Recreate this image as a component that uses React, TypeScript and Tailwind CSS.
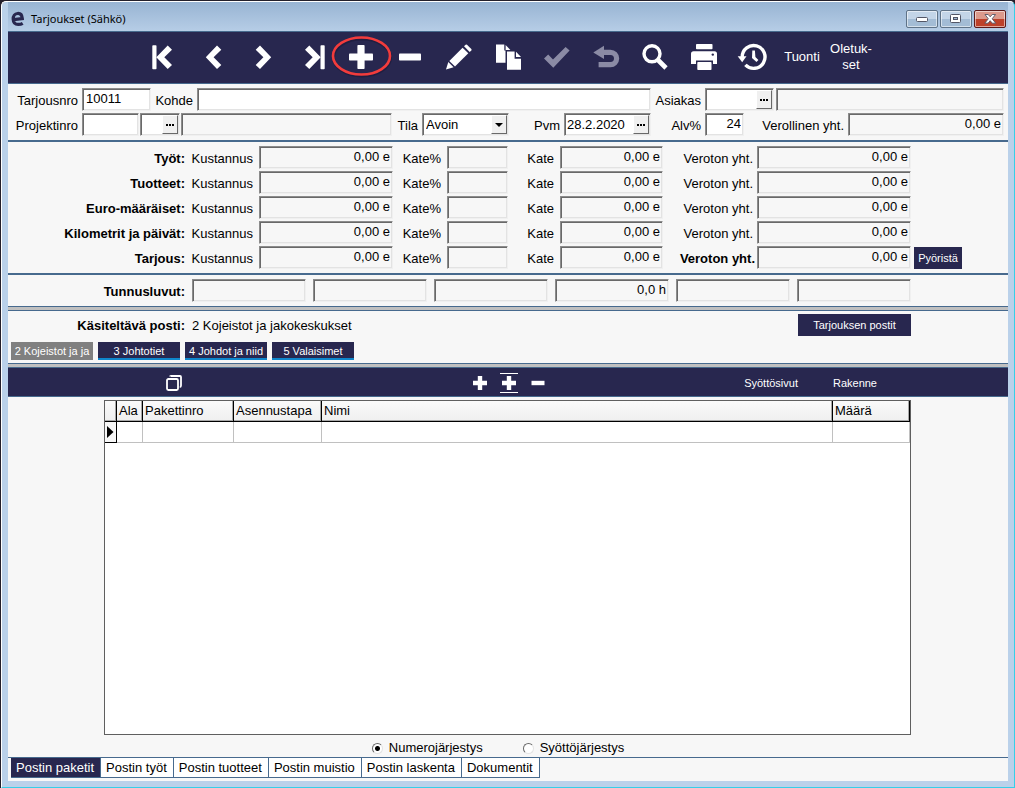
import { useState } from "react";
import type { ReactNode } from "react";
import clsx from "clsx";

const SUNKEN =
  "h-[23px] min-w-0 rounded-none border border-t-[#8c8c8c] border-l-[#8c8c8c] border-r-[#f0f0f0] border-b-[#f0f0f0] shadow-[inset_1px_1px_0_#696969,inset_-1px_-1px_0_#e3e3e3] outline-none";

interface FieldProps {
  id?: string;
  label?: string;
  value?: string;
  readOnly?: boolean;
  right?: boolean;
  className?: string;
}

function Field({ id, label, value = "", readOnly, right, className }: FieldProps) {
  return (
    <input
      id={id}
      aria-label={label}
      type="text"
      defaultValue={value}
      readOnly={readOnly}
      className={clsx(
        SUNKEN,
        "pr-0.5 pb-0.5 pl-[3px]",
        readOnly ? "bg-[#f7f7f7]" : "bg-white",
        right && "text-right",
        className
      )}
    />
  );
}

// Text box with a "..." lookup button on its right side
function LookupField({ id, label, value = "", className }: FieldProps) {
  return (
    <div className={clsx(SUNKEN, "flex bg-white p-px", className)}>
      <input
        id={id}
        aria-label={label}
        type="text"
        defaultValue={value}
        className="min-w-0 flex-1 bg-transparent pl-px outline-none"
      />
      <button
        type="button"
        aria-label="Valitse"
        className="flex w-4 shrink-0 items-center justify-center border border-t-white border-l-white border-r-[#696969] border-b-[#696969] bg-[#f0f0f0]"
      >
        <svg width="8" height="2" viewBox="0 0 8 2">
          <path d="M0 0h2v2H0zM3 0h2v2H3zM6 0h2v2H6z" fill="#000" />
        </svg>
      </button>
    </div>
  );
}

const NAV_ICONS: { name: string; dim?: boolean; marked?: boolean; art: ReactNode }[] = [
  {
    name: "Ensimmäinen",
    art: (
      <>
        <rect x="3.3" y="4.3" width="4.2" height="24" rx="0.8" />
        <path d="M18.7 4.5 23 8.7 15.3 16.3 23 24 18.7 28 7.3 16.3z" />
      </>
    ),
  },
  { name: "Edellinen", art: <path d="M19 4.5 23.3 8.7 15.6 16.3 23.3 24 19 28 7.8 16.3z" /> },
  { name: "Seuraava", art: <path d="M13 4.5 8.7 8.7 16.4 16.3 8.7 24 13 28 24.2 16.3z" /> },
  {
    name: "Viimeinen",
    art: (
      <>
        <path d="M13.3 4.5 9 8.7 16.7 16.3 9 24 13.3 28 24.7 16.3z" />
        <rect x="24.5" y="4.3" width="4.2" height="24" rx="0.8" />
      </>
    ),
  },
  {
    name: "Lisää",
    marked: true,
    art: (
      <>
        <rect x="12.4" y="4" width="7.2" height="24" rx="0.8" />
        <rect x="4" y="12.4" width="24" height="7.2" rx="0.8" />
      </>
    ),
  },
  { name: "Poista", art: <rect x="5" y="12.4" width="22" height="7.2" rx="0.8" /> },
  {
    name: "Muokkaa",
    art: (
      <>
        <path d="M3 28.6 5.3 21 10.6 26.3z" />
        <path d="M6.3 20 19.6 6.7 25.3 12.3 12 25.4z" />
        <path d="M21 5.3 22.6 3.8q.7-.6 1.4 0L28.3 8q.7.7 0 1.5L26.7 11z" />
      </>
    ),
  },
  {
    name: "Kopioi",
    art: (
      <>
        <path d="M4 3.4h8.3v6h1.2v12.3H4z" />
        <path d="M13.6 4 18.4 9H13.6z" />
        <path d="M15 10.5h7.6v7.2H29v11H15z" />
        <path d="M24 10.8 29 16H24z" />
      </>
    ),
  },
  { name: "Tallenna", dim: true, art: <path d="M3 17.6 7.2 13.6 12 18.4 24.6 6 28.6 9.6 12.3 26.8z" /> },
  {
    name: "Peruuta",
    dim: true,
    art: (
      <>
        <path d="M3.3 11.4 14 4.8V18z" />
        <path d="M12 11.4h8.5a6.1 6.1 0 0 1 0 12.2H8.6" fill="none" stroke="currentColor" strokeWidth="5.2" />
      </>
    ),
  },
  {
    name: "Etsi",
    art: (
      <>
        <circle cx="13" cy="12.8" r="8" fill="none" stroke="currentColor" strokeWidth="3.4" />
        <path d="M18.5 18.5 27 27" stroke="currentColor" strokeWidth="4.6" />
      </>
    ),
  },
  {
    name: "Tulosta",
    art: (
      <>
        <rect x="8" y="3" width="16.5" height="5.2" rx="0.8" />
        <path d="M5.5 10.3h21a2.5 2.5 0 0 1 2.5 2.5V23h-4v-3.6H8V23H3V12.8a2.5 2.5 0 0 1 2.5-2.5z" />
        <circle cx="24.8" cy="13.6" r="1.2" fill="#28274f" />
        <rect x="9.3" y="21" width="14.2" height="8" rx="0.8" />
      </>
    ),
  },
  {
    name: "Historia",
    art: (
      <>
        <path d="M5.2 16A11.4 11.4 0 1 1 8.4 23.9" fill="none" stroke="currentColor" strokeWidth="3.4" />
        <path d="M0.7 15.3h8.8L5.2 21.2z" />
        <path d="M15.3 9.5h2.6l.5 6.5 3 3-1.9 1.9-4.5-3.8z" />
      </>
    ),
  },
];

const SUM_ROWS = ["Työt:", "Tuotteet:", "Euro-määräiset:", "Kilometrit ja päivät:", "Tarjous:"];
const POSTS = ["2 Kojeistot ja ja", "3 Johtotiet", "4 Johdot ja niid", "5 Valaisimet"];
const TABS = ["Postin paketit", "Postin työt", "Postin tuotteet", "Postin muistio", "Postin laskenta", "Dokumentit"];

function TitleBar() {
  const control =
    "flex h-[18px] w-8 items-center justify-center rounded-[2px] border shadow-[inset_0_0_0_1px_#ffffff88]";
  const glass = "border-[#5f7388] bg-linear-to-b from-[#c3d5e8] from-50% to-[#a3bcd5] to-50%";
  return (
    <header className="flex h-[29px] items-center bg-linear-to-b from-[#98b4d3] to-[#b6cde6] pt-1 pr-[2px] pl-[3px]">
      <svg width="14" height="16" viewBox="0 0 14 16" aria-hidden="true">
        <path
          d="M2.6 8.7 11.3 7.5C11 4 9 2.3 6.6 2.5 3.8 2.7 2.1 5 2.2 8.2c.1 3.4 2.1 5.2 5 5.2 1.7 0 3.2-.3 4.5-1.1"
          fill="none"
          stroke="#28274f"
          strokeWidth="3.2"
        />
      </svg>
      <h1 className="ml-1.5 flex-1 font-['Noto_Sans',sans-serif] text-[11px]">Tarjoukset (Sähkö)</h1>
      <div className="flex gap-0.5">
        <button type="button" aria-label="Pienennä" className={clsx(control, glass)}>
          <svg width="12" height="6" viewBox="0 0 12 6">
            <rect x="0.5" y="1.5" width="11" height="4" rx="1" fill="#fff" stroke="#535666" />
          </svg>
        </button>
        <button type="button" aria-label="Suurenna" className={clsx(control, glass)}>
          <svg width="12" height="10" viewBox="0 0 12 10">
            <rect x="0.5" y="0.5" width="10" height="8" rx="1" fill="#fff" stroke="#535666" />
            <rect x="3.5" y="3.5" width="4" height="2" fill="#9fb8d2" stroke="#535666" />
          </svg>
        </button>
        <button
          type="button"
          aria-label="Sulje"
          className={clsx(control, "border-[#5c1a1a] bg-linear-to-b from-[#dc9a8c] from-50% to-[#bd412a] to-50%")}
        >
          <svg width="13" height="10" viewBox="0 0 13 10">
            <path
              d="M1 .5h3.2l2 2.3 2-2.3h3.3L8.2 4.8l3.5 4.4H8.3l-2.1-2.5-2.1 2.5H.8l3.5-4.4z"
              fill="#fff"
              stroke="#535666"
              strokeWidth="0.9"
            />
          </svg>
        </button>
      </div>
    </header>
  );
}

function Toolbar() {
  return (
    <nav className="flex h-[53px] justify-center border-y border-[#476a8e] bg-[#28274f] pb-px text-white">
      {NAV_ICONS.map((icon) => (
        <button
          key={icon.name}
          type="button"
          aria-label={icon.name}
          className={clsx(
            "relative flex w-[49px] shrink-0 items-center justify-center",
            icon.dim && "text-[#8b8ba5]"
          )}
        >
          <svg width="32" height="32" viewBox="0 0 32 32" fill="currentColor">
            {icon.art}
          </svg>
          {icon.marked && (
            <svg className="absolute top-1 -left-2 z-10" width="64" height="44" viewBox="0 0 64 44">
              <ellipse cx="33" cy="21.5" rx="28.5" ry="18.5" fill="none" stroke="#1a1938" strokeWidth="3" opacity="0.6" />
              <ellipse cx="32.5" cy="20" rx="28.5" ry="18.5" fill="none" stroke="#f23c3c" strokeWidth="2.6" />
            </svg>
          )}
        </button>
      ))}
      <button type="button" className="w-[49px] shrink-0">Tuonti</button>
      <button type="button" className="w-[49px] shrink-0 leading-4">
        Oletuk-
        <br />
        set
      </button>
    </nav>
  );
}

function OfferHeader() {
  const label = "shrink-0 pt-0.5 text-right";
  return (
    <section className="flex flex-col gap-0.5 py-1 pr-1">
      <div className="flex items-center">
        <label htmlFor="tarjousnro" className={clsx(label, "w-[74px] pr-1")}>Tarjousnro</label>
        <Field id="tarjousnro" value="10011" className="w-[69px]" />
        <label htmlFor="kohde" className={clsx(label, "w-[46px] pr-1")}>Kohde</label>
        <Field id="kohde" className="flex-1" />
        <label htmlFor="asiakas" className={clsx(label, "w-[54px] pr-1")}>Asiakas</label>
        <div className="flex w-[299px] shrink-0 gap-0.5">
          <LookupField id="asiakas" className="w-[69px]" />
          <Field label="Asiakkaan nimi" readOnly className="flex-1" />
        </div>
      </div>
      <div className="flex items-center">
        <label htmlFor="projektinro" className={clsx(label, "w-[74px] pr-1")}>Projektinro</label>
        <div className="flex min-w-0 flex-1 gap-px">
          <Field id="projektinro" className="w-[57px]" />
          <LookupField label="Projektin osa" className="w-10" />
          <Field label="Projektin nimi" readOnly className="flex-1" />
        </div>
        <label htmlFor="tila" className={clsx(label, "w-[30px] pr-1")}>Tila</label>
        <div className={clsx(SUNKEN, "relative flex w-[87px] bg-white p-px")}>
          <select id="tila" className="w-full appearance-none bg-transparent pl-0.5 outline-none">
            <option>Avoin</option>
            <option>Hyväksytty</option>
            <option>Hylätty</option>
          </select>
          <span className="pointer-events-none absolute inset-y-px right-px flex w-4 items-center justify-center border border-t-white border-l-white border-r-[#696969] border-b-[#696969] bg-[#f0f0f0]">
            <svg width="8" height="4" viewBox="0 0 8 4">
              <path d="M0 0h8L4 4z" />
            </svg>
          </span>
        </div>
        <label htmlFor="pvm" className={clsx(label, "w-[55px] pr-1")}>Pvm</label>
        <LookupField id="pvm" value="28.2.2020" className="w-[87px]" />
        <label htmlFor="alv" className={clsx(label, "w-[54px] pr-1")}>Alv%</label>
        <div className="flex w-[299px] shrink-0 items-center">
          <Field id="alv" value="24" right className="w-[39px]" />
          <label htmlFor="verollinen" className={clsx(label, "w-[104px] pr-1")}>Verollinen yht.</label>
          <Field id="verollinen" value="0,00 e" readOnly right className="flex-1" />
        </div>
      </div>
    </section>
  );
}

function Totals() {
  return (
    <section className="flex flex-col gap-0.5 border-t-2 border-[#476a8e] py-1">
      {SUM_ROWS.map((row, i) => {
        const last = i === SUM_ROWS.length - 1;
        return (
          <div
            key={row}
            className="grid grid-cols-[177px_74px_134fr_54px_61fr_52px_103fr_94px_154fr_97px] items-center text-right"
          >
            <span className="pt-0.5 font-bold">{row}</span>
            <label htmlFor={`kustannus-${i}`} className="pt-0.5 pr-1.5">Kustannus</label>
            <Field id={`kustannus-${i}`} value="0,00 e" readOnly right />
            <label htmlFor={`katepros-${i}`} className="pt-0.5 pr-1.5">Kate%</label>
            <Field id={`katepros-${i}`} readOnly right />
            <label htmlFor={`kate-${i}`} className="pt-0.5 pr-1.5">Kate</label>
            <Field id={`kate-${i}`} value="0,00 e" readOnly right />
            <label htmlFor={`veroton-${i}`} className={clsx("pt-0.5", last ? "pr-0.5 font-bold" : "pr-1")}>
              Veroton yht.
            </label>
            <Field id={`veroton-${i}`} value="0,00 e" readOnly right />
            {last && (
              <button type="button" className="ml-[3px] h-[22px] w-12 bg-[#28274f] text-center text-[11px] text-white">
                Pyöristä
              </button>
            )}
          </div>
        );
      })}
    </section>
  );
}

function KeyFigures() {
  return (
    <section className="flex items-center border-t-2 border-[#476a8e] py-1 pr-[97px]">
      <span className="mr-[7px] w-[177px] shrink-0 pt-0.5 text-right font-bold">Tunnusluvut:</span>
      <div className="grid flex-1 grid-cols-6 gap-[7px]">
        {["", "", "", "0,0 h", "", ""].map((v, i) => (
          <Field key={i} label={`Tunnusluku ${i + 1}`} value={v} readOnly right />
        ))}
      </div>
    </section>
  );
}

function Splitter() {
  return <div className="h-[5px] shrink-0 border-y border-[#476a8e] bg-[#c0c0c0]" />;
}

function PostPicker() {
  const [active, setActive] = useState(0);
  return (
    <section className="py-[3px]">
      <div className="flex items-center pr-[97px]">
        <span className="mr-[7px] w-[177px] shrink-0 pt-0.5 text-right font-bold">Käsiteltävä posti:</span>
        <span className="flex-1 pt-0.5">2 Kojeistot ja jakokeskukset</span>
        <button type="button" className="h-[22px] w-[113px] bg-[#28274f] text-[11px] text-white">
          Tarjouksen postit
        </button>
      </div>
      <div className="mt-1.5 flex gap-[5px] pl-[3px]">
        {POSTS.map((post, i) => (
          <button
            key={post}
            type="button"
            onClick={() => setActive(i)}
            className={clsx(
              "h-[18px] w-[82px] overflow-hidden text-[11px] leading-[18px] whitespace-nowrap text-white",
              i === active ? "bg-[#808080]" : "bg-[#28274f] shadow-[inset_0_-2px_0_#0e86cc]"
            )}
          >
            {post}
          </button>
        ))}
      </div>
    </section>
  );
}

function PackageBar() {
  return (
    <div className="grid h-[29px] shrink-0 grid-cols-[1fr_auto_1fr] items-center border-b border-[#476a8e] bg-[#28274f] pt-0.5 text-[11px] text-white">
      <div className="flex pl-[158px]">
        <button type="button" aria-label="Kopioi rivi">
          <svg width="16" height="16" viewBox="0 0 16 16" fill="none" stroke="currentColor" strokeWidth="1.8">
            <rect x="1" y="4" width="11" height="11" rx="1.4" />
            <path d="M4 1.6Q4 1 5 1H14Q15 1 15 2V10.6Q15 12 13.8 12" />
          </svg>
        </button>
      </div>
      <div className="flex gap-[11px] pl-0.5">
        <button type="button" aria-label="Lisää rivi">
          <svg width="18" height="20" viewBox="0 0 18 20" fill="currentColor">
            <path d="M6.8 3h4.4v4.8H16v4.4h-4.8V17H6.8v-4.8H2V7.8h4.8z" />
          </svg>
        </button>
        <button type="button" aria-label="Lisää väliin">
          <svg width="18" height="20" viewBox="0 0 18 20" fill="currentColor">
            <path d="M0 0h18v1H0zM0 19h18v1H0zM6.8 3h4.4v4.8H16v4.4h-4.8V17H6.8v-4.8H2V7.8h4.8z" />
          </svg>
        </button>
        <button type="button" aria-label="Poista rivi">
          <svg width="18" height="20" viewBox="0 0 18 20" fill="currentColor">
            <path d="M2.5 7.8h13v4.4h-13z" />
          </svg>
        </button>
      </div>
      <div className="flex justify-end gap-[35px] pr-[131px]">
        <button type="button">Syöttösivut</button>
        <button type="button">Rakenne</button>
      </div>
    </div>
  );
}

function PackageTable() {
  const th =
    "h-[21px] border-r border-b border-black bg-linear-to-b from-[#fafafa] to-[#efefef] pl-0.5 text-left font-normal shadow-[inset_-1px_-1px_0_#a8a8a8]";
  const td = "h-[21px] border-r border-b border-[#c0c0c0]";
  return (
    <div className="mt-[3px] mr-[97px] ml-24 min-h-24 flex-1 border border-[#5f5f5f] bg-white">
      <table className="w-full table-fixed border-separate border-spacing-0">
        <colgroup>
          <col className="w-3" />
          <col className="w-[26px]" />
          <col className="w-[91px]" />
          <col className="w-[88px]" />
          <col />
          <col className="w-[77px]" />
        </colgroup>
        <thead>
          <tr>
            <th className={th} aria-label="Valinta" />
            <th className={th}>Ala</th>
            <th className={th}>Pakettinro</th>
            <th className={th}>Asennustapa</th>
            <th className={th}>Nimi</th>
            <th className={th}>Määrä</th>
          </tr>
        </thead>
        <tbody>
          <tr>
            <td className="border-r border-b border-black bg-[#f7f7f7]">
              <svg className="ml-0.5" width="7" height="12" viewBox="0 0 7 12">
                <path d="M0 0 6.5 6 0 12z" />
              </svg>
            </td>
            <td className={td} />
            <td className={td} />
            <td className={td} />
            <td className={td} />
            <td className={td} />
          </tr>
        </tbody>
      </table>
    </div>
  );
}

function OrderRadios() {
  const radio =
    "size-[11px] appearance-none rounded-full border border-t-[#696969] border-l-[#696969] border-r-[#e3e3e3] border-b-[#e3e3e3] bg-white checked:bg-[radial-gradient(circle,#000_2px,#fff_3px)]";
  return (
    <fieldset className="flex h-[22px] shrink-0 items-center justify-center gap-10 pt-[3px] pr-5">
      <label className="flex items-center gap-1.5">
        <input type="radio" name="order" defaultChecked className={radio} />
        Numerojärjestys
      </label>
      <label className="flex items-center gap-1.5">
        <input type="radio" name="order" className={radio} />
        Syöttöjärjestys
      </label>
    </fieldset>
  );
}

function BottomTabs() {
  const [tab, setTab] = useState(0);
  return (
    <nav className="flex h-6 shrink-0 items-start border-t border-[#476a8e] pl-[3px]">
      {TABS.map((name, i) => (
        <button
          key={name}
          type="button"
          onClick={() => setTab(i)}
          className={clsx(
            "h-5 border-r border-b border-[#476a8e] pr-1.5 pl-[5px] leading-4",
            i === tab ? "bg-[#28274f] text-white" : "bg-white"
          )}
        >
          {name}
        </button>
      ))}
    </nav>
  );
}

export default function App() {
  return (
    <div className="min-h-screen bg-[#231f2b] pt-px pl-px font-['Liberation_Sans',Arial,sans-serif] text-[13px] leading-5 text-black">
      <div className="flex min-h-[calc(100vh-1px)] flex-col rounded-t-[5px] border border-t-white border-r-[#35cfe8] border-b-[#35cfe8] border-l-white bg-[#bad1ea] px-1.5 pb-1.5">
        <TitleBar />
        <main className="flex flex-1 flex-col bg-[#f7f7f7]">
          <Toolbar />
          <OfferHeader />
          <Totals />
          <KeyFigures />
          <Splitter />
          <PostPicker />
          <Splitter />
          <PackageBar />
          <PackageTable />
          <OrderRadios />
          <BottomTabs />
        </main>
      </div>
    </div>
  );
}
